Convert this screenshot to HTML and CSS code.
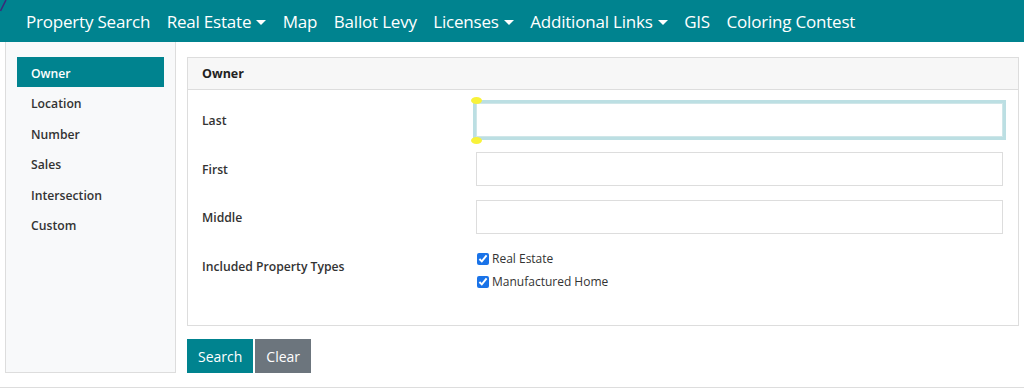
FILE: index.html
```html
<!DOCTYPE html>
<html lang="en">
<head>
    <meta charset="UTF-8">
    <meta name="viewport" content="width=device-width, initial-scale=1.0">
    <title>Property Search</title>
    <link rel="stylesheet" href="styles.css">
</head>
<body>
    <svg class="corner-mark" width="8" height="12" viewBox="0 0 8 12"><path d="M0.5 11 Q3 6 6 0" stroke="#3b2a7a" stroke-width="1.6" fill="none"/></svg>
    <nav class="navbar">
        <a class="nav-link" href="#">Property Search</a>
        <a class="nav-link dropdown" href="#">Real Estate</a>
        <a class="nav-link" href="#">Map</a>
        <a class="nav-link" href="#">Ballot Levy</a>
        <a class="nav-link dropdown" href="#">Licenses</a>
        <a class="nav-link dropdown" href="#">Additional Links</a>
        <a class="nav-link" href="#">GIS</a>
        <a class="nav-link" href="#">Coloring Contest</a>
    </nav>

    <div class="main">
        <aside class="sidebar">
            <a class="side-item active" href="#">Owner</a>
            <a class="side-item" href="#">Location</a>
            <a class="side-item" href="#">Number</a>
            <a class="side-item" href="#">Sales</a>
            <a class="side-item" href="#">Intersection</a>
            <a class="side-item" href="#">Custom</a>
        </aside>

        <section class="content">
            <div class="card">
                <div class="card-header">Owner</div>
                <div class="card-body">
                    <div class="form-row first-row">
                        <label class="form-label">Last</label>
                        <div class="field">
                            <input class="form-control focused" type="text">
                            <span class="marker marker-top"></span>
                            <span class="marker marker-bottom"></span>
                        </div>
                    </div>
                    <div class="form-row">
                        <label class="form-label">First</label>
                        <div class="field"><input class="form-control" type="text"></div>
                    </div>
                    <div class="form-row">
                        <label class="form-label">Middle</label>
                        <div class="field"><input class="form-control" type="text"></div>
                    </div>
                    <div class="form-row types-row">
                        <label class="form-label">Included Property Types</label>
                        <div class="checks">
                            <label class="check"><input type="checkbox" checked> Real Estate</label>
                            <label class="check"><input type="checkbox" checked> Manufactured Home</label>
                        </div>
                    </div>
                </div>
            </div>
            <div class="actions">
                <button class="btn btn-primary">Search</button>
                <button class="btn btn-secondary">Clear</button>
            </div>
        </section>
    </div>
    <div class="footer-line"></div>
</body>
</html>
```

FILE: styles.css
```css
body {
    margin: 0;
    font-family: 'Open Sans', 'Noto Sans', sans-serif;
    color: #333;
    background: #fff;
}
.corner-mark {
    position: absolute;
    left: 0;
    top: 0;
}
.navbar {
    display: flex;
    align-items: center;
    gap: 16.5px;
    height: 42px;
    padding-left: 26px;
    background: #00838f;
}
.nav-link {
    color: #fff;
    text-decoration: none;
    font-size: 17px;
    letter-spacing: -0.2px;
}
.dropdown::after {
    content: "";
    display: inline-block;
    margin-left: 5px;
    vertical-align: 3px;
    border-top: 5px solid #fff;
    border-left: 5px solid transparent;
    border-right: 5px solid transparent;
}
.main {
    display: flex;
    align-items: stretch;
    padding: 0 5px 0 5px;
}
.sidebar {
    width: 147px;
    padding: 15px 11px 0 11px;
    background: #f8f9fa;
    border: 1px solid #ddd;
    border-top: none;
}
.side-item {
    display: block;
    height: 29.6px;
    padding-top: 1px;
    line-height: 30.6px;
    padding-left: 14px;
    font-size: 12.2px;
    font-weight: 600;
    color: #333;
    text-decoration: none;
}
.side-item.active {
    background: #00838f;
    color: #fff;
    height: 28px;
    padding-top: 2px;
    line-height: 30px;
    margin-bottom: 1px;
}
.content {
    flex: 1;
    margin-left: 11px;
    padding-top: 15px;
}
.card {
    border: 1px solid #ddd;
}
.card-header {
    height: 31px;
    line-height: 31px;
    padding-left: 14px;
    background: #f7f7f7;
    border-bottom: 1px solid #ddd;
    font-size: 12.5px;
    font-weight: 700;
    color: #222;
}
.card-body {
    padding: 13px 15px 35px 14px;
}
.form-row {
    display: flex;
    align-items: center;
    margin-bottom: 14px;
}
.first-row {
    margin-bottom: 15px;
}
.form-label {
    width: 274px;
    font-size: 12.2px;
    font-weight: 600;
    color: #333;
}
.field {
    position: relative;
    flex: 1;
}
.form-control {
    display: block;
    box-sizing: border-box;
    width: 100%;
    height: 34px;
    border: 1px solid #ddd;
    background: #fff;
    outline: none;
}
.form-control.focused {
    border-color: #cfe6e8;
    box-shadow: 0 0 0 3px #bcdfe3;
}
.marker {
    position: absolute;
    left: -5px;
    width: 11px;
    height: 7px;
    border-radius: 50%;
    background: #f8f23a;
}
.marker-top {
    top: -6px;
}
.marker-bottom {
    bottom: -7px;
}
.types-row {
    align-items: flex-start;
    margin-top: 16px;
    margin-bottom: 0;
}
.types-row .form-label {
    padding-top: 8px;
}
.checks {
    display: flex;
    flex-direction: column;
    gap: 6px;
}
.check {
    display: flex;
    align-items: center;
    gap: 3px;
    font-size: 12px;
    color: #333;
}
.check input {
    margin: 0 0 0 1px;
    width: 12px;
    height: 12px;
    accent-color: #1a73e8;
}
.actions {
    display: flex;
    gap: 2px;
    margin-top: 13px;
}
.btn {
    height: 34px;
    padding: 0 11px;
    border: none;
    color: #fff;
    font-family: inherit;
    font-size: 14px;
    cursor: pointer;
}
.btn-primary {
    background: #00838f;
}
.btn-secondary {
    background: #6c757d;
}
.footer-line {
    margin-top: 14px;
    border-top: 1px solid #ddd;
}
```
